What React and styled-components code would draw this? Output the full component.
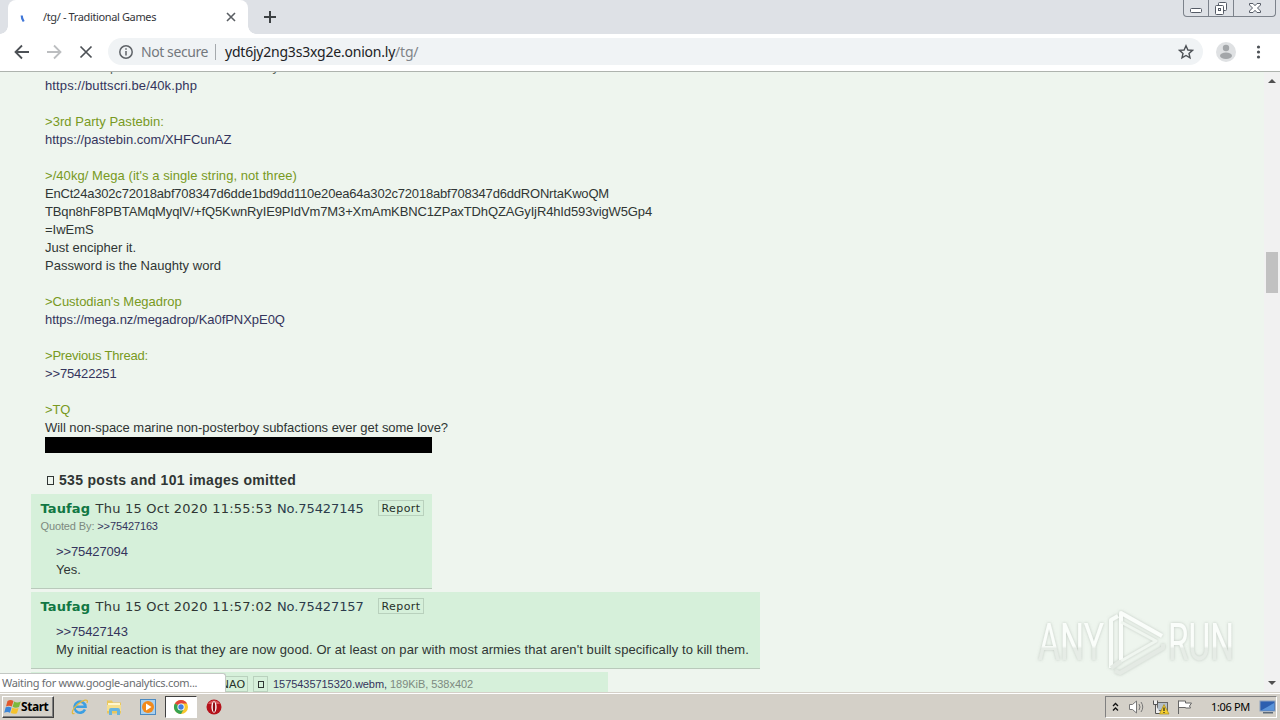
import React from "react";
import styled, { createGlobalStyle } from "styled-components";

const arial = `"Liberation Sans", Arial, sans-serif`;
const verdana = `"DejaVu Sans", Verdana, sans-serif`;
const tahoma = `"Noto Sans", Tahoma, sans-serif`;

const GlobalStyle = createGlobalStyle`
  * {
    box-sizing: border-box;
  }
  body {
    margin: 0;
    overflow: hidden;
  }
`;

const Screen = styled.div`
  width: 1280px;
  height: 720px;
  display: flex;
  flex-direction: column;
  overflow: hidden;
  background: #eef5ee;
`;

/* browser chrome */
const TabStrip = styled.div`
  height: 34px;
  flex-shrink: 0;
  display: flex;
  padding-left: 8px;
  background: #dee1e6;
`;

const Tab = styled.div`
  position: relative;
  width: 240px;
  height: 34px;
  display: flex;
  align-items: center;
  padding-left: 10px;
  background: #fff;
  border-radius: 8px 8px 0 0;

  &::before,
  &::after {
    content: "";
    position: absolute;
    bottom: 0;
    width: 8px;
    height: 8px;
  }
  &::before {
    left: -8px;
    background: radial-gradient(circle at 0 0, transparent 7.5px, #fff 8px);
  }
  &::after {
    right: -8px;
    background: radial-gradient(circle at 100% 0, transparent 7.5px, #fff 8px);
  }
`;

const TabTitle = styled.span`
  width: 183px;
  margin-left: 9px;
  padding-bottom: 1px;
  font: 11px ${tahoma};
  letter-spacing: -0.37px;
  color: #35363a;
  white-space: nowrap;
`;

const NewTab = styled.div`
  margin-left: 15px;
  padding-top: 10px;
`;

const WindowButtons = styled.div`
  width: 93px;
  height: 17px;
  margin: 0 4px 0 auto;
  display: grid;
  grid-template-columns: 25px 25px 1fr;
  border: 1px solid #7c828b;
  border-top: none;
  border-radius: 0 0 4px 4px;
`;

const WindowButton = styled.div`
  display: flex;
  justify-content: center;
  border-right: ${(props) => (props.$last ? "none" : "1px solid #7c828b")};
`;

const Toolbar = styled.div`
  height: 38px;
  flex-shrink: 0;
  display: flex;
  align-items: center;
  padding: 0 0 2px 12px;
  background: #fff;
  border-bottom: 1px solid #aeb3ae;

  > svg {
    flex-shrink: 0;
    margin-right: 12px;
  }
`;

const Omnibox = styled.div`
  width: 1095px;
  height: 27px;
  display: flex;
  align-items: center;
  padding: 0 9px 0 10px;
  border-radius: 14px;
  background: #f0f3f5;
  font: 14px ${tahoma};
  white-space: nowrap;
`;

const NotSecure = styled.span`
  width: 75px;
  margin-left: 7px;
  color: #74787d;
  letter-spacing: -0.42px;
  border-right: 1px solid #a5a9ad;
  line-height: 16px;
`;

const Url = styled.span`
  flex: 1;
  margin-left: 9px;
  color: #202124;
  letter-spacing: -0.22px;
`;

const UrlPath = styled.span`
  color: #808488;
`;

const Avatar = styled.div`
  display: flex;
  margin: 0 0 0 12px;
`;

/* page */
const Viewport = styled.div`
  position: relative;
  height: 620px;
  flex-shrink: 0;
  display: flex;
  justify-content: space-between;
  overflow: hidden;
`;

const Board = styled.div`
  width: 1264px;
  height: 620px;
  overflow: hidden;
  color: #303634;
  font: 13px/18px ${arial};
  white-space: pre;
`;

const OpMessage = styled.div`
  margin: -13px 0 0 45px;
`;

const Line = styled.div`
  height: 18px;
  letter-spacing: ${(props) => props.$track || 0}px;
  color: ${(props) => (props.$quote ? "#789922" : props.$link ? "#34345c" : "inherit")};

  ${OpMessage} > &:first-child {
    line-height: 16px;
    color: #59655c;
  }
`;

const Spoiler = styled.div`
  width: 387px;
  height: 16px;
  background: #000;
`;

const Omitted = styled.div`
  display: flex;
  align-items: center;
  height: 18px;
  margin: 18px 0 5px 47px;
  font-weight: bold;
  font-size: 14px;
  letter-spacing: 0.31px;
`;

const Tofu = styled.i`
  width: ${(props) => props.$size || 7}px;
  height: ${(props) => (props.$size || 8) + 1}px;
  border: 1px solid #303634;
  margin-right: ${(props) => props.$gap || 0}px;
`;

const Reply = styled.div`
  width: ${(props) => props.$width}px;
  height: ${(props) => props.$height}px;
  margin: 0 0 3px 31px;
  padding: 6px 0 0 9.5px;
  background: #d6f0da;
  border-bottom: 1px solid #b9c9bb;
`;

const PostHead = styled.div`
  display: flex;
  align-items: center;
  height: 18px;
  font-family: ${verdana};
`;

const Name = styled.b`
  width: 55px;
  color: #117743;
  letter-spacing: 0.12px;
`;

const When = styled.span`
  width: 181.5px;
  letter-spacing: 0.23px;
`;

const PostNo = styled.span`
  width: 101px;
  letter-spacing: -0.1px;
  color: #2c3c4c;
`;

const Button = styled.span`
  display: flex;
  align-items: center;
  justify-content: center;
  width: ${(props) => props.$width}px;
  height: 16px;
  margin-bottom: 2px;
  border: 1px solid #b9d1bd;
  font: 11px ${verdana};
  letter-spacing: ${(props) => props.$track || 0}px;
  color: #263029;
`;

const QuotedBy = styled.div`
  height: 17px;
  font-size: 11px;
  line-height: 17px;
  letter-spacing: -0.12px;
  color: #7d8a80;
`;

const Backlink = styled.span`
  color: #34345c;
`;

const Message = styled.div`
  margin: ${(props) => props.$top}px 0 0 15.5px;
`;

const FileHead = styled.div`
  display: flex;
  align-items: center;
  gap: 5px;
  height: 16px;
  margin: -2px 0 0 170.5px;
  font-size: 11px;
  letter-spacing: -0.05px;
  color: #34345c;

  ${Button} {
    margin-bottom: 0;
  }
`;

const FileMeta = styled.span`
  margin-left: -2px;
  color: #7d8a80;
`;

const Scrollbar = styled.div`
  width: 16px;
  display: flex;
  flex-direction: column;
  align-items: center;
  background: #f1f1f1;
`;

const Thumb = styled.div`
  width: 12px;
  height: 41px;
  margin: 163px 0 auto;
  background: #c1c1c1;
`;

const StatusBubble = styled.div`
  position: absolute;
  left: 0;
  bottom: 0;
  width: 226px;
  height: 19px;
  padding-left: 2px;
  background: #fff;
  border: solid #c3c8c4;
  border-width: 1px 1px 0 0;
  border-radius: 0 3px 0 0;
  font: 11px/18px ${tahoma};
  letter-spacing: -0.3px;
  color: #6a6d70;
`;

const Watermark = styled.svg`
  position: absolute;
  left: 1030px;
  top: 530px;
`;

/* windows taskbar */
const Taskbar = styled.div`
  height: 28px;
  display: flex;
  align-items: center;
  padding: 1px 3px 0 2px;
  background: #d4d0c8;
  box-shadow: inset 0 1px #d4d0c8, inset 0 2px #fff;
`;

const StartButton = styled.div`
  width: 52px;
  height: 22px;
  display: flex;
  align-items: center;
  padding-left: 1px;
  border: 1px solid;
  border-color: #fff #404040 #404040 #fff;
  box-shadow: inset -1px -1px #808080;
  font: bold 12px ${tahoma};
  letter-spacing: -0.45px;
  color: #000;
`;

const QuickLaunch = styled.div`
  display: flex;
  align-items: center;
  margin-left: 9px;
`;

const Launcher = styled.div`
  width: ${(props) => (props.$active ? 32 : 34)}px;
  height: 22px;
  display: flex;
  align-items: center;
  justify-content: center;
  background: ${(props) => (props.$active ? "#fff" : "transparent")};
  border: 1px solid transparent;
  border-color: ${(props) => (props.$active ? "#404040 #fff #fff #404040" : "transparent")};
`;

const Tray = styled.div`
  width: 172px;
  height: 22px;
  display: flex;
  align-items: center;
  margin-left: auto;
  padding-left: 5px;
  border: 1px solid;
  border-color: #808080 #fff #fff #808080;
`;

const TrayIcon = styled.svg`
  flex-shrink: 0;
  margin-left: ${(props) => props.$gap}px;
`;

const Clock = styled.span`
  width: 50px;
  margin-left: 17px;
  font: 11px ${tahoma};
  letter-spacing: -0.33px;
  white-space: nowrap;
  color: #000;
`;

const opLines = [
  { text: ">For more printable Battlescribe directly", track: 0.1 },
  { text: "https://buttscri.be/40k.php", link: true, track: 0.116 },
  { text: "" },
  { text: ">3rd Party Pastebin:", quote: true, track: 0.04 },
  { text: "https://pastebin.com/XHFCunAZ", link: true },
  { text: "" },
  { text: ">/40kg/ Mega (it's a single string, not three)", quote: true, track: 0.06 },
  {
    text: "EnCt24a302c72018abf708347d6dde1bd9dd110e20ea64a302c72018abf708347d6ddRONrtaKwoQM",
    track: -0.194,
  },
  {
    text: "TBqn8hF8PBTAMqMyqlV/+fQ5KwnRyIE9PIdVm7M3+XmAmKBNC1ZPaxTDhQZAGyIjR4hId593vigW5Gp4",
    track: -0.122,
  },
  { text: "=IwEmS" },
  { text: "Just encipher it." },
  { text: "Password is the Naughty word", track: 0.015 },
  { text: "" },
  { text: ">Custodian's Megadrop", quote: true, track: -0.03 },
  { text: "https://mega.nz/megadrop/Ka0fPNXpE0Q", link: true, track: -0.04 },
  { text: "" },
  { text: ">Previous Thread:", quote: true, track: -0.2 },
  { text: ">>75422251", link: true, track: -0.15 },
  { text: "" },
  { text: ">TQ", quote: true, track: -0.2 },
  { text: "Will non-space marine non-posterboy subfactions ever get some love?", track: -0.035 },
];

const WindowsFlag = () => (
  <svg width="17" height="18" viewBox="0 0 17 16">
    <path d="M3.500 2Q6.500 0 9.500 2L7.800 7.500Q5 6 2 7.500z" fill="#e2582b" />
    <path d="M10.200 2.500Q13 4.500 16.800 2.500L15 8Q11.500 9.500 8.600 7.800z" fill="#7cb83c" />
    <path d="M1.700 8.300Q4.500 7 7.500 8.500L6 13.800Q3.500 12.200.2 13.800z" fill="#3c86d8" />
    <path d="M8.300 8.800Q11 10.300 14.600 9L13 14.200Q10 15.500 6.700 14z" fill="#f5c22c" />
  </svg>
);

const ExplorerIcon = () => (
  <svg width="18" height="18" viewBox="0 0 18 18" fill="none">
    <path d="M14 11.500A5.500 5.500 0 1 1 14.500 8.800H5" stroke="#3c9fe2" strokeWidth="2.600" />
    <path d="M3.500 15.500C-1 17 2 10 7 6S18 0 16 5" stroke="#e2b940" strokeWidth="1.300" />
  </svg>
);

const FolderIcon = () => (
  <svg width="18" height="18" viewBox="0 0 18 18">
    <path d="M2 2.500h5l1 2h8v11H2z" fill="#e9c75e" />
    <path d="M3 5h12v3H3z" fill="#fff6cd" />
    <path d="M2 7h14v6H2z" fill="#f6df8d" />
    <path d="M4 17v-5q0-2 2-2h7q2 0 2 2v5h-3v-4H7v4z" fill="#67b4df" />
  </svg>
);

const MediaIcon = () => (
  <svg width="18" height="18" viewBox="0 0 18 18">
    <rect x="1.500" y="1.500" width="15" height="15" fill="#a9d0ee" stroke="#4b8ac2" />
    <circle cx="9" cy="9" r="6" fill="#f28a1c" />
    <path d="M7 5.500v7l5.500-3.500z" fill="#fff" />
  </svg>
);

const ChromeIcon = () => (
  <svg width="16" height="16" viewBox="0 0 16 16">
    <circle cx="8" cy="8" r="7" fill="#f9c72d" />
    <path d="M8 8L1.900 4.500A7 7 0 0 1 14.100 4.500H8z" fill="#e2453a" />
    <path d="M8 8L1.900 4.500A7 7 0 0 0 8 15L11 9.700z" fill="#37a351" />
    <circle cx="8" cy="8" r="3.600" fill="#fff" />
    <circle cx="8" cy="8" r="2.700" fill="#427fe0" />
  </svg>
);

const OperaIcon = () => (
  <svg width="18" height="18" viewBox="0 0 18 18">
    <circle cx="9" cy="9" r="7.500" fill="#b5121b" />
    <path d="M3 6a7 7 0 0 1 12 0z" fill="#d9575b" />
    <ellipse cx="9" cy="9" rx="2.600" ry="5.800" fill="#fff" />
    <ellipse cx="9" cy="9" rx="1.200" ry="5" fill="#8f0c14" />
  </svg>
);

const AnyRun = () => (
  <Watermark width="230" height="86" viewBox="0 0 230 86">
    <defs>
      <linearGradient id="fade" x1="0" y1="0" x2="0" y2="1">
        <stop offset="0.56" stopColor="#fafdfa" />
        <stop offset="0.6" stopColor="#e6ece6" />
      </linearGradient>
      <filter id="glow" x="-10%" y="-20%" width="120%" height="140%">
        <feDropShadow dx="0" dy="0" stdDeviation="1.500" floodColor="#8f9a90" floodOpacity="0.5" />
      </filter>
    </defs>
    <g filter="url(#glow)" fontFamily="Roboto, sans-serif" fontSize="51" fill="url(#fade)">
      <text x="8" y="58" textLength="66" lengthAdjust="spacingAndGlyphs">ANY</text>
      <text x="138" y="58" textLength="66" lengthAdjust="spacingAndGlyphs">RUN</text>
    </g>
    <g filter="url(#glow)" fill="none" strokeWidth="4" strokeLinejoin="round">
      <path d="M81 66V18L88 14" stroke="#f8fcf8" />
      <path d="M81 66L91 59M85 69L90 71L133 46V42" stroke="#e4eae4" />
      <path d="M91 58V11L132 34" stroke="#fafdfa" />
      <path d="M91 20L126 39L91 59" stroke="#f0f6f0" strokeWidth="3" />
    </g>
  </Watermark>
);

const PostHeader = ({ time, no }) => (
  <PostHead>
    <Name>Taufag</Name>
    <When>{time}</When>
    <PostNo>No.{no}</PostNo>
    <Button $width={46} $track={0.4}>Report</Button>
  </PostHead>
);

const App = () => {
  return (
    <Screen>
      <GlobalStyle />
      <TabStrip>
        <Tab>
          <svg width="16" height="16" viewBox="0 0 16 16">
            <path d="M3.700 6.500Q3.700 9.500 5.700 12.500" stroke="#3f76d8" strokeWidth="2.200" fill="none" />
          </svg>
          <TabTitle>/tg/ - Traditional Games</TabTitle>
          <svg width="10" height="10" viewBox="0 0 10 10" stroke="#5a5e63" strokeWidth="1.600">
            <path d="M1 1l8 8M9 1L1 9" />
          </svg>
        </Tab>
        <NewTab>
          <svg width="14" height="14" viewBox="0 0 14 14" stroke="#3c4043" strokeWidth="2">
            <path d="M7 1v12M1 7h12" />
          </svg>
        </NewTab>
        <WindowButtons>
          <WindowButton>
            <svg width="24" height="16" viewBox="0 0 24 16">
              <rect x="6.500" y="8.500" width="11" height="4" rx="1" fill="#fff" stroke="#555b66" />
            </svg>
          </WindowButton>
          <WindowButton>
            <svg width="24" height="16" viewBox="0 0 24 16" fill="#fff" stroke="#555b66">
              <rect x="9.500" y="2.500" width="8" height="8" rx="1" />
              <rect x="6.500" y="5.500" width="8" height="9" rx="1" />
              <rect x="9.500" y="8.500" width="2" height="2" />
            </svg>
          </WindowButton>
          <WindowButton $last>
            <svg width="24" height="16" viewBox="0 0 24 16" fill="#fff" stroke="#555b66">
              <path d="M6.500 3.500h3.500l2 2.200 2-2.200h3.500v1.500L14.500 8l3 3v1.500H14l-2-2.200-2 2.200H6.500V11l3-3-3-3z" />
            </svg>
          </WindowButton>
        </WindowButtons>
      </TabStrip>

      <Toolbar>
        <svg width="20" height="20" viewBox="0 0 20 20" fill="none" stroke="#4d5156" strokeWidth="1.800">
          <path d="M17 10H4M10 3.500L3.500 10l6.500 6.500" />
        </svg>
        <svg width="20" height="20" viewBox="0 0 20 20" fill="none" stroke="#bcbec0" strokeWidth="1.800">
          <path d="M3 10h13M10 3.500l6.500 6.500-6.500 6.500" />
        </svg>
        <svg width="20" height="20" viewBox="0 0 20 20" fill="none" stroke="#4d5156" strokeWidth="1.700">
          <path d="M4.500 4.500l11 11M15.500 4.500l-11 11" />
        </svg>
        <Omnibox>
          <svg width="16" height="16" viewBox="0 0 16 16" fill="none" stroke="#5f6368" strokeWidth="1.500">
            <circle cx="8" cy="8" r="6.200" />
            <path d="M8 7v4.500M8 4.300v1.500" />
          </svg>
          <NotSecure>Not secure</NotSecure>
          <Url>
            ydt6jy2ng3s3xg2e.onion.ly<UrlPath>/tg/</UrlPath>
          </Url>
          <svg width="16" height="16" viewBox="0 0 16 16" fill="none" stroke="#4d5156" strokeWidth="1.400">
            <path d="M8 1.800l1.900 4.200 4.600.4-3.500 3 1 4.500L8 11.500l-4 2.400 1-4.500-3.500-3 4.600-.4z" />
          </svg>
        </Omnibox>
        <Avatar>
          <svg width="22" height="22" viewBox="0 0 22 22">
            <circle cx="11" cy="11" r="10" fill="#dfe1e3" />
            <circle cx="11" cy="7" r="3.200" fill="#a3a6a9" />
            <ellipse cx="11" cy="14.800" rx="6" ry="3.200" fill="#a3a6a9" />
          </svg>
        </Avatar>
        <TrayIcon $gap={14} width="16" height="16" viewBox="0 0 16 16" fill="#4d5156">
          <circle cx="7.500" cy="3" r="1.600" />
          <circle cx="7.500" cy="8" r="1.600" />
          <circle cx="7.500" cy="13" r="1.600" />
        </TrayIcon>
      </Toolbar>

      <Viewport>
        <Board>
          <OpMessage>
            {opLines.map((line, i) => (
              <Line key={i} $quote={line.quote} $link={line.link} $track={line.track}>
                {line.text}
              </Line>
            ))}
            <Spoiler />
          </OpMessage>
          <Omitted>
            <Tofu $gap={5} />
            535 posts and 101 images omitted
          </Omitted>
          <Reply $width={401} $height={95}>
            <PostHeader time="Thu 15 Oct 2020 11:55:53" no="75427145" />
            <QuotedBy>
              Quoted By: <Backlink>&gt;&gt;75427163</Backlink>
            </QuotedBy>
            <Message $top={8}>
              <Line $link $track={-0.12}>&gt;&gt;75427094</Line>
              <Line>Yes.</Line>
            </Message>
          </Reply>
          <Reply $width={729} $height={77}>
            <PostHeader time="Thu 15 Oct 2020 11:57:02" no="75427157" />
            <Message $top={7}>
              <Line $link $track={-0.12}>&gt;&gt;75427143</Line>
              <Line $track={0.083}>
                My initial reaction is that they are now good. Or at least on par with most armies that aren't built
                {" specifically to kill them."}
              </Line>
            </Message>
          </Reply>
          <Reply $width={577} $height={60}>
            <FileHead>
              <Button $width={37}>SNAO</Button>
              <Button $width={15}>
                <Tofu $size={6} />
              </Button>
              <span>1575435715320.webm,</span>
              <FileMeta>189KiB, 538x402</FileMeta>
            </FileHead>
          </Reply>
        </Board>
        <Scrollbar>
          <svg width="16" height="17" viewBox="0 0 16 17" fill="#505050">
            <path d="M4 11l4-4 4 4z" />
          </svg>
          <Thumb />
          <svg width="16" height="17" viewBox="0 0 16 17" fill="#505050">
            <path d="M4 6l4 4 4-4z" />
          </svg>
        </Scrollbar>
        <StatusBubble>Waiting for www.google-analytics.com...</StatusBubble>
        <AnyRun />
      </Viewport>

      <Taskbar>
        <StartButton>
          <WindowsFlag />
          Start
        </StartButton>
        <QuickLaunch>
          <Launcher><ExplorerIcon /></Launcher>
          <Launcher><FolderIcon /></Launcher>
          <Launcher><MediaIcon /></Launcher>
          <Launcher $active><ChromeIcon /></Launcher>
          <Launcher><OperaIcon /></Launcher>
        </QuickLaunch>
        <Tray>
          <TrayIcon $gap={0} width="9" height="14" viewBox="0 0 9 12" fill="none" stroke="#111" strokeWidth="1.300">
            <path d="M2 5l2.500-2.500L7 5M2 9.500L4.500 7 7 9.500" />
          </TrayIcon>
          <TrayIcon $gap={8} width="18" height="16" viewBox="0 0 18 16" fill="none" stroke="#777">
            <path d="M1.500 5.500h3L8.500 2v12l-4-3.500h-3z" fill="#fff" />
            <path d="M11 5q2 3 0 6M13 3q3.500 5 0 10" />
          </TrayIcon>
          <TrayIcon $gap={6} width="18" height="16" viewBox="0 0 18 16">
            <rect x="5.500" y="3.500" width="10" height="8" fill="#b4bfc9" stroke="#666" />
            <path d="M1.500 1.500v4h4v-4M3.500 5.500v9h5" fill="#eee" stroke="#555" />
            <path d="M12 5.500l5 9.500H7.500z" fill="#f6cf2f" stroke="#a88a16" strokeWidth=".7" />
            <path d="M12 8.500v3.500M12 13v1" stroke="#222" strokeWidth="1.200" />
          </TrayIcon>
          <TrayIcon $gap={6} width="18" height="16" viewBox="0 0 18 16" fill="#fff" stroke="#666">
            <path d="M2.500 15V1.500M2.500 2h7v2h6l-2 3 1 2H9.500V8.500h-7" />
          </TrayIcon>
          <Clock>1:06 PM</Clock>
          <TrayIcon $gap={0} width="18" height="16" viewBox="0 0 18 16">
            <rect x="2" y="2" width="15" height="10" fill="#2c5fb0" stroke="#8aa0bd" />
            <path d="M3 11.500L16 4v7.500z" fill="#5a94da" />
            <path d="M5 13h10v1.500H5z" fill="#5d6a78" />
          </TrayIcon>
        </Tray>
      </Taskbar>
    </Screen>
  );
};

export default App;
